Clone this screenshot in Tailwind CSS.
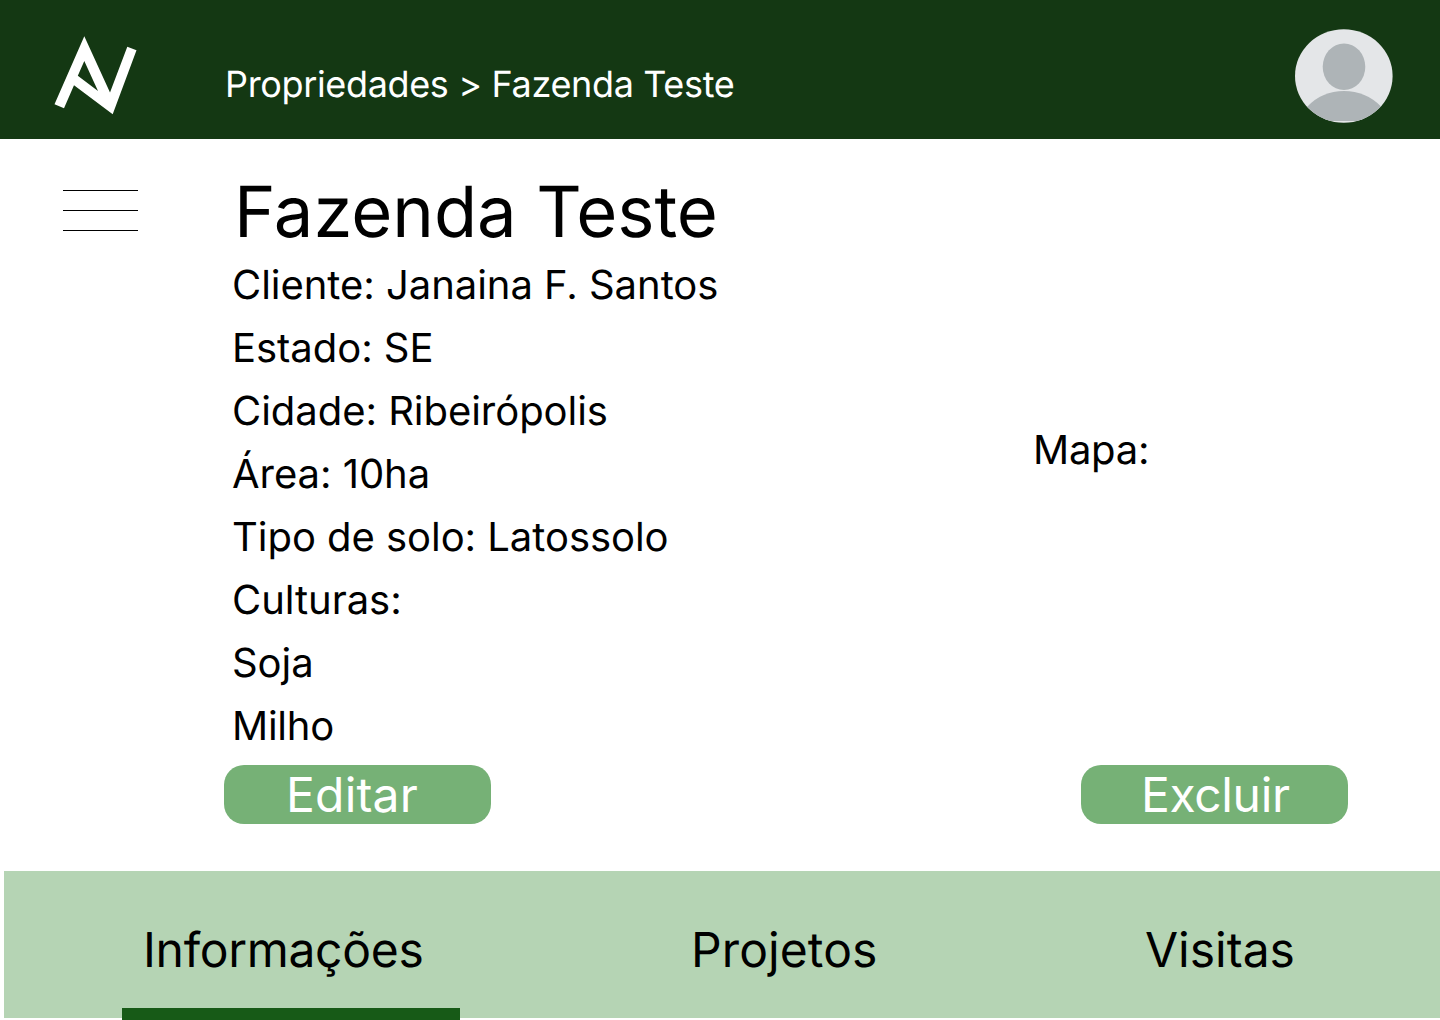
<!DOCTYPE html>
<html lang="pt-BR"><head><meta charset="utf-8"><title>Fazenda Teste</title>
<script src="https://cdn.jsdelivr.net/npm/@tailwindcss/browser@4"></script></head>
<body class="w-[1440px] h-[1020px] overflow-hidden bg-white text-black font-['Inter',sans-serif] flex flex-col [text-rendering:geometricPrecision]">
<header class="h-[139px] shrink-0 bg-[#143813] text-white flex">
<svg class="w-[226px] h-[139px] shrink-0" viewBox="0 0 226 139" fill="#fff"><path fill-rule="evenodd" d="M84.3 36.3L110 92.5L127.3 46.8L136.5 50.3L112.7 114.2L74 85.3L64 108.3L54.5 104.2ZM84.3 61L77.8 75.7L98 91Z"/></svg>
<p class="pt-[62px] text-[36px] leading-[44px] grow whitespace-nowrap tracking-[-0.35px] -ml-px">Propriedades &gt; Fazenda Teste</p>
<svg class="w-[98px] h-[94px] mt-[29px] mr-[47px]" viewBox="0 0 98 94"><defs><clipPath id="a"><ellipse cx="48.8" cy="47" rx="48.8" ry="46.8"/></clipPath></defs><ellipse cx="48.8" cy="47" rx="48.8" ry="46.8" fill="#e4e6e8"/><g fill="#aeb4b7" clip-path="url(#a)"><ellipse cx="49" cy="37.8" rx="21.3" ry="23.3"/><path d="M0 92L12.5 77.5Q27 62 49 62T86 77.5L98 92Z"/></g></svg>
</header>
<main class="h-[732px] shrink-0 flex">
<button class="w-[75px] h-[41px] mt-[51px] ml-[63px] flex flex-col justify-between"><span class="h-px w-full bg-black"></span><span class="h-px w-full bg-black"></span><span class="h-px w-full bg-black"></span></button>
<section class="ml-[86px] pt-[30px] w-[700px]">
<h1 class="text-[70.5px] leading-[87px] pl-[10px] tracking-[-0.05px]">Fazenda Teste</h1>
<div class="pl-2 -mt-[3px] text-[40px] leading-[63px] whitespace-nowrap tracking-[-0.04px]"><p>Cliente: Janaina F. Santos</p><p>Estado: SE</p><p>Cidade: Ribeirópolis</p><p>Área: 10ha</p><p>Tipo de solo: Latossolo</p><p>Culturas:</p><p>Soja</p><p class="tracking-[-0.25px]">Milho</p></div>
<button class="mt-[8px] w-[267px] h-[59px] rounded-[20px] bg-[#76b176] text-white text-[48px] leading-[59px] pl-[62px] text-left block tracking-[0.2px]">Editar</button>
</section>
<aside class="w-[424px] pt-[279px] flex flex-col justify-between pb-[47px]"><p class="text-[40px] leading-[63px] pl-[109px] tracking-[-0.25px]">Mapa:</p><button class="ml-[157px] w-[267px] h-[59px] rounded-[20px] bg-[#76b176] text-white text-[48px] leading-[59px] pl-[60px] text-left tracking-[-0.35px]">Excluir</button></aside>
</main>
<nav class="h-[147px] shrink-0 ml-1 bg-[#b5d4b4] text-[48px] flex flex-col">
<div class="h-[137px] shrink-0 flex pt-[50px] leading-[58px]"><a class="w-[548px] pl-[139px] tracking-[-0.3px]">Informações</a><a class="w-[454px] pl-[139px] tracking-[0.1px]">Projetos</a><a class="pl-[139px]">Visitas</a></div>
<div class="ml-[118px] w-[338px] h-3 shrink-0 bg-[#175a17]"></div>
</nav>
</body></html>
